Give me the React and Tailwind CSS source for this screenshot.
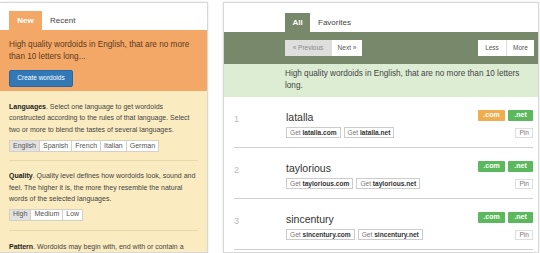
import React from 'react';

const font = { fontFamily: '"Liberation Sans", Arial, sans-serif' };

function Seg({ items, active }) {
  return (
    <div className="flex">
      {items.map((it, i) => (
        <span
          key={it}
          className={
            'h-[12px] px-[3px] flex items-center text-[7px] border border-[#d4d0c4] text-[#555] ' +
            (i > 0 ? '-ml-px ' : '') +
            (it === active ? 'bg-[#e2e2e2]' : 'bg-white')
          }
        >
          {it}
        </span>
      ))}
    </div>
  );
}

function Row({ n, word, comOrange }) {
  return (
    <div className="flex h-[51px] border-b border-[#cfcfcf] ml-[10px] mr-[5px]">
      <div className="w-[52px] pt-[16px] text-[9px] text-[#bbb]">{n}</div>
      <div className="flex-1 pt-[14px]">
        <div className="flex justify-between items-start">
          <div className="text-[10.5px] text-[#333] leading-[12px]">{word}</div>
          <div className="flex gap-[3px] -mt-[1px]">
            <span className={'h-[11px] w-[27px] flex items-center justify-center text-[7px] font-bold text-white rounded-[1px] ' + (comOrange ? 'bg-[#f0ad4e]' : 'bg-[#5cb85c]')}>.com</span>
            <span className="h-[11px] w-[25px] flex items-center justify-center text-[7px] font-bold text-white rounded-[1px] bg-[#5cb85c]">.net</span>
          </div>
        </div>
        <div className="flex justify-between items-center mt-[4px]">
          <div className="flex gap-[3px]">
            <span className="h-[11px] px-[3px] flex items-center text-[6.6px] border border-[#ccc] text-[#777] bg-white">Get&nbsp;<b className="text-[#333]">{word}.com</b></span>
            <span className="h-[11px] px-[3px] flex items-center text-[6.6px] border border-[#ccc] text-[#777] bg-white">Get&nbsp;<b className="text-[#333]">{word}.net</b></span>
          </div>
          <span className="h-[10px] px-[3px] flex items-center text-[6.6px] border border-[#ddd] text-[#777] bg-white">Pin</span>
        </div>
      </div>
    </div>
  );
}

export default function App() {
  return (
    <div className="w-[540px] h-[253px] bg-white overflow-hidden pt-[2px] flex gap-[15px]" style={font}>
      {/* Left panel */}
      <div className="w-[208px] shrink-0 border border-[#d8d8d8] border-l-0 shadow-[0_0_2px_rgba(0,0,0,0.12)] flex flex-col">
        <div className="h-[28px] flex items-end pl-[9px] bg-white">
          <div className="h-[19px] w-[33px] bg-[#f4a868] text-white font-bold text-[8px] flex items-center justify-center">New</div>
          <div className="h-[19px] px-[8px] text-[#444] text-[8px] flex items-center">Recent</div>
        </div>
        <div className="bg-[#f4a868] px-[9px] pt-[9px] h-[62px]">
          <p className="text-[8.2px] leading-[12px] text-[#5a3a1c]">High quality wordoids in English, that are no more than 10 letters long...</p>
          <button className="mt-[5px] h-[17px] w-[64px] bg-[#3379b8] text-white text-[6.5px] rounded-[2px] border border-[#2a66a0]">Create wordoids</button>
        </div>
        <div className="flex-1 bg-[#faecc0] px-[9px] pt-[10px]">
          <p className="text-[7px] leading-[11.5px] text-[#444]"><b className="text-[#222]">Languages</b>. Select one language to get wordoids constructed according to the rules of that language. Select two or more to blend the tastes of several languages.</p>
          <div className="mt-[5px]">
            <Seg items={['English', 'Spanish', 'French', 'Italian', 'German']} active="English" />
          </div>
          <div className="border-t border-[#e8d8a6] mt-[8px] pt-[9px]">
            <p className="text-[7px] leading-[11.5px] text-[#444]"><b className="text-[#222]">Quality</b>. Quality level defines how wordoids look, sound and feel. The higher it is, the more they resemble the natural words of the selected languages.</p>
            <div className="mt-[4px]">
              <Seg items={['High', 'Medium', 'Low']} active="High" />
            </div>
          </div>
          <div className="border-t border-[#e8d8a6] mt-[9px] pt-[10px]">
            <p className="text-[7px] leading-[11.5px] text-[#444]"><b className="text-[#222]">Pattern</b>. Wordoids may begin with, end with or contain a</p>
          </div>
        </div>
      </div>

      {/* Right panel */}
      <div className="w-[316px] shrink-0 border border-[#d8d8d8] shadow-[0_0_2px_rgba(0,0,0,0.12)] flex flex-col bg-white">
        <div className="h-[29px] flex items-end pl-[61px]">
          <div className="h-[19px] w-[25px] bg-[#77896a] text-white font-bold text-[8px] flex items-center justify-center">All</div>
          <div className="h-[19px] px-[8px] text-[#444] text-[8px] flex items-center">Favorites</div>
        </div>
        <div className="h-[32px] bg-[#77896a] flex items-center justify-between pl-[61px] pr-[4px]">
          <div className="flex">
            <span className="h-[16px] w-[46px] bg-[#dedede] text-[#888] text-[6.5px] flex items-center justify-center">« Previous</span>
            <span className="h-[16px] w-[31px] bg-white text-[#555] text-[6.5px] flex items-center justify-center border-l border-[#ddd]">Next »</span>
          </div>
          <div className="flex">
            <span className="h-[16px] w-[28px] bg-white text-[#555] text-[6.5px] flex items-center justify-center">Less</span>
            <span className="h-[16px] w-[28px] bg-white text-[#555] text-[6.5px] flex items-center justify-center border-l border-[#ddd]">More</span>
          </div>
        </div>
        <div className="h-[33px] bg-[#dcedd4] pl-[61px] pr-[10px] pt-[4px]">
          <p className="text-[8.2px] leading-[12px] text-[#444]">High quality wordoids in English, that are no more than 10 letters long.</p>
        </div>
        <Row n="1" word="latalla" comOrange />
        <Row n="2" word="taylorious" />
        <Row n="3" word="sincentury" />
      </div>
    </div>
  );
}
